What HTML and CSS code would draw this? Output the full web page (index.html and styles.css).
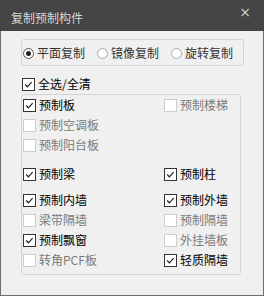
FILE: index.html
```html
<!DOCTYPE html>
<html lang="zh-CN">

<head>
  <meta charset="UTF-8">
  <title>复制预制构件</title>
  <link rel="stylesheet" href="styles.css">
</head>

<body>
  <div class="window">
    <div class="titlebar">
      <span class="title">复制预制构件</span>
      <span class="close">×</span>
    </div>

    <div class="content">
      <!-- 复制方式 -->
      <div class="mode-box">
        <label class="radio checked"><span class="circle"></span>平面复制</label>
        <label class="radio"><span class="circle"></span>镜像复制</label>
        <label class="radio"><span class="circle"></span>旋转复制</label>
      </div>

      <label class="check on all"><span class="box"><svg viewBox="0 0 13 13"><polyline points="2.5,6.5 5.2,9.2 10.2,3.6"/></svg></span>全选/全清</label>

      <!-- 构件列表 -->
      <div class="part-box">
        <div class="row first">
          <label class="check on"><span class="box"><svg viewBox="0 0 13 13"><polyline points="2.5,6.5 5.2,9.2 10.2,3.6"/></svg></span>预制板</label>
          <label class="check off"><span class="box"></span>预制楼梯</label>
        </div>
        <div class="row">
          <label class="check off"><span class="box"></span>预制空调板</label>
        </div>
        <div class="row">
          <label class="check off"><span class="box"></span>预制阳台板</label>
        </div>

        <div class="row gap-big">
          <label class="check on"><span class="box"><svg viewBox="0 0 13 13"><polyline points="2.5,6.5 5.2,9.2 10.2,3.6"/></svg></span>预制梁</label>
          <label class="check on"><span class="box"><svg viewBox="0 0 13 13"><polyline points="2.5,6.5 5.2,9.2 10.2,3.6"/></svg></span>预制柱</label>
        </div>

        <div class="row gap-mid">
          <label class="check on"><span class="box"><svg viewBox="0 0 13 13"><polyline points="2.5,6.5 5.2,9.2 10.2,3.6"/></svg></span>预制内墙</label>
          <label class="check on"><span class="box"><svg viewBox="0 0 13 13"><polyline points="2.5,6.5 5.2,9.2 10.2,3.6"/></svg></span>预制外墙</label>
        </div>
        <div class="row">
          <label class="check off"><span class="box"></span>梁带隔墙</label>
          <label class="check off"><span class="box"></span>预制隔墙</label>
        </div>
        <div class="row">
          <label class="check on"><span class="box"><svg viewBox="0 0 13 13"><polyline points="2.5,6.5 5.2,9.2 10.2,3.6"/></svg></span>预制飘窗</label>
          <label class="check off"><span class="box"></span>外挂墙板</label>
        </div>
        <div class="row">
          <label class="check off"><span class="box"></span>转角PCF板</label>
          <label class="check on"><span class="box"><svg viewBox="0 0 13 13"><polyline points="2.5,6.5 5.2,9.2 10.2,3.6"/></svg></span>轻质隔墙</label>
        </div>
      </div>
    </div>
  </div>
</body>

</html>
```

FILE: styles.css
```css
body {
  margin: 0;
  padding: 0;
  background-color: #f0f0f0;
  font-family: "Noto Sans CJK SC", "Noto Sans", sans-serif;
  font-size: 12px;
}

.window {
  width: 264px;
  height: 296px;
  box-sizing: border-box;
  border: 1px solid #6e6e6e;
  border-top: none;
  background-color: #f0f0f0;
}

.titlebar {
  height: 31px;
  background-color: #454545;
  display: flex;
  justify-content: space-between;
  padding: 0 13px 0 11px;
  margin: 0 -1px;
}

.title {
  color: #d6d6d6;
  font-size: 12px;
  line-height: 12px;
  padding-top: 12px;
}

.close {
  color: #cfcfcf;
  font-family: "DejaVu Sans", sans-serif;
  font-size: 14px;
  line-height: 14px;
  padding-top: 5px;
}

.content {
  padding-left: 20px;
}

.mode-box {
  width: 223px;
  height: 27px;
  box-sizing: border-box;
  margin-top: 8px;
  border: 1px solid #d4d4d4;
  border-radius: 3px;
  display: flex;
  align-items: center;
  padding-left: 1px;
  padding-top: 1px;
}

.radio {
  display: flex;
  align-items: center;
  flex-shrink: 0;
  white-space: nowrap;
  color: #333;
  line-height: 14px;
  margin-right: 12px;
}

.radio:last-child {
  margin-right: 0;
}

.circle {
  width: 11px;
  height: 11px;
  box-sizing: border-box;
  border: 1px solid #a8a8a8;
  border-radius: 50%;
  background-color: #fff;
  margin-right: 3px;
  position: relative;
}

.radio.checked .circle {
  border-color: #555;
}

.radio.checked .circle::after {
  content: "";
  position: absolute;
  left: 2px;
  top: 2px;
  width: 5px;
  height: 5px;
  border-radius: 50%;
  background-color: #222;
}

.check {
  display: flex;
  align-items: center;
  height: 20px;
  line-height: 14px;
  white-space: nowrap;
  color: #000;
}

.check.off {
  color: #7a7a7a;
}

.box {
  width: 13px;
  height: 13px;
  box-sizing: border-box;
  border: 1px solid #333;
  background-color: #fff;
  margin-right: 3px;
  margin-left: 1px;
}

.check.off .box {
  border-color: #cdcdcd;
}

.box svg {
  display: block;
  width: 11px;
  height: 11px;
  fill: none;
  stroke: #222;
  stroke-width: 1.4;
}

.all {
  margin-top: 8px;
}

.part-box {
  width: 220px;
  height: 181px;
  box-sizing: border-box;
  border: 1px solid #d4d4d4;
  border-radius: 3px;
}

.row {
  display: grid;
  grid-template-columns: 141px 1fr;
}

.row.gap-big {
  margin-top: 9px;
}

.row.gap-mid {
  margin-top: 6px;
}
```
